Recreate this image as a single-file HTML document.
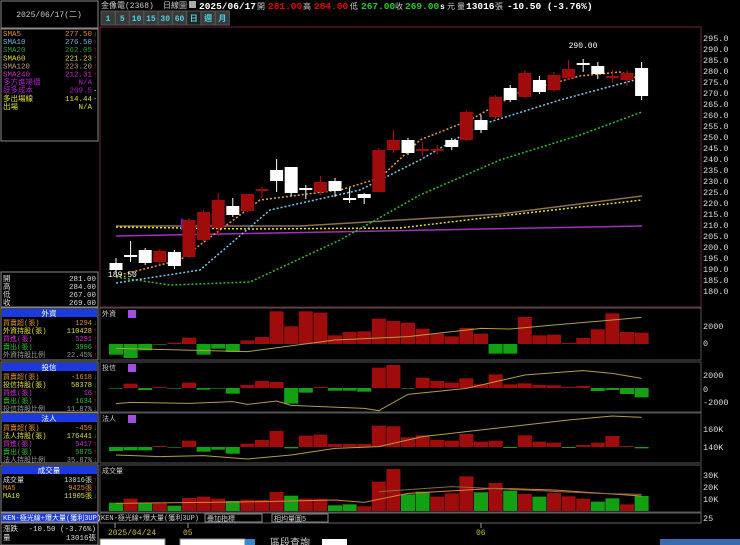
<!DOCTYPE html><html><head><meta charset="utf-8"><style>
body{margin:0;background:#000;width:740px;height:545px;overflow:hidden;font-family:"Liberation Sans","Noto Sans CJK TC",sans-serif;}
svg{position:absolute;left:0;top:0}
text{font-family:"Liberation Mono","Noto Sans CJK TC",monospace;}
</style></head><body>
<svg id="s" width="740" height="545" xmlns="http://www.w3.org/2000/svg"></svg>
<script>
var S='';
function R(x,y,w,h,f,st){S+='<rect x="'+x+'" y="'+y+'" width="'+w+'" height="'+h+'" fill="'+f+'"'+(st?' stroke="'+st+'"':'')+'/>';}
function T(x,y,t,c,sz,a,b){S+='<text x="'+x+'" y="'+y+'" fill="'+c+'" font-size="'+(sz||9)+'"'+(a?' text-anchor="'+a+'"':'')+(b?' font-weight="bold" font-family="Liberation Sans"':'')+'>'+t+'</text>';}
function L(x1,y1,x2,y2,c,w){S+='<line x1="'+x1+'" y1="'+y1+'" x2="'+x2+'" y2="'+y2+'" stroke="'+c+'" stroke-width="'+(w||1)+'"/>';}
function P(pts,c,dash,w){S+='<polyline fill="none" points="'+pts+'" stroke="'+c+'" stroke-width="'+(w||1)+'"'+(dash?' stroke-dasharray="'+dash+'"':'')+'/>';}
var RED='#a00c0c',GRN='#13a013';
R(1,1,97,27,'#000','#888');T(49,17,'2025/06/17(二)','#ccc',8,'middle');
var ma=[['SMA5','277.50','#e0902a','↓',GRN],['SMA10','276.50','#6cb6e0','↑','#e00'],['SMA20','262.05','#2aa02a','↑','#e00'],['SMA60','221.23','#e0e020','↑','#e00'],['SMA120','223.20','#c0a070','↑','#e00'],['SMA240','212.31','#d030d0','↑','#e00'],['多方進場價','N/A','#b020d0','',''],['既多成本','209.5','#b020d0','-','#ccc'],['多出場線','114.44','#e0e020','-','#ccc'],['出場','N/A','#e0e020','','']];
R(1,29,97,112,'#000','#888');
ma.forEach(function(m,i){var y=36+i*8.1;T(3,y,m[0],m[2],7.5);T(92,y,m[1],m[2],7.5,'end');if(m[3])T(93,y,m[3],m[4],7);});
R(1,272,97,35,'#000','#888');
[['開','281.00'],['高','284.00'],['低','267.00'],['收','269.00']].forEach(function(m,i){T(3,281+i*8,m[0],'#ddd',7.5);T(96,281+i*8,m[1],'#ddd',7.5,'end');});
function block(y,h,title,rows){R(1,y,97,h,'#000','#888');R(2,y+1,95,8,'#1a3adf');T(49,y+8,title,'#fff',7.5,'middle');
rows.forEach(function(r,i){var yy=y+17+i*8;T(3,yy,r[0],r[1],7);T(92,yy,r[2],r[1],7,'end');if(r[3])T(93,yy,r[3],r[3]=='↓'?GRN:'#e00',7);});}
block(308,52,'外資',[['買賣超(張)','#e0902a','1294','↓'],['外資持股(張)','#e0e020','110428','↑'],['買進(張)','#d030d0','5291','↑'],['賣出(張)','#2ac02a','3996','↑'],['外資持股比例','#999','22.45%','↑']]);
block(362,50,'投信',[['買賣超(張)','#e0902a','-1618','↓'],['投信持股(張)','#e0e020','58378','↓'],['買進(張)','#d030d0','16','↑'],['賣出(張)','#2ac02a','1634','↑'],['投信持股比例','#999','11.87%','↓']]);
block(413,50,'法人',[['買賣超(張)','#e0902a','-459','↓'],['法人持股(張)','#e0e020','176441','↓'],['買進(張)','#d030d0','5417','↑'],['賣出(張)','#2ac02a','5875','↑'],['法人持股比例','#999','35.87%','↓']]);
block(465,47,'成交量',[['成交量','#ddd','13016張','↑'],['MA5','#e0902a','9425張','↑'],['MA10','#e0e020','11905張','↓']]);
R(1,513,97,9,'#1a3adf','#888');T(3,520,'KEN-極光線+爆大量(獲利3UP)','#fff',7);
R(1,523,97,22,'#000','#888');T(3,531,'漲跌','#ddd',7.5);T(96,531,'-10.50 (-3.76%)','#ddd',7.5,'end');T(3,540,'量','#ddd',7.5);T(96,540,'13016張','#ddd',7.5,'end');
// header
T(101,8,'金像電(2368)','#ccc',8);T(163,8,'日線圖','#ccc',8);R(189,1,7,7,'#aaa');
T(199,9,'2025/06/17','#fff',9.5,null,1);T(257,9,'開','#ccc',8);T(268,9,'281.00','#e00',9.5,null,1);T(303,9,'高','#ccc',8);T(314,9,'284.00','#e00',9.5,null,1);
T(350,9,'低','#ccc',8);T(361,9,'267.00','#2c2',9.5,null,1);T(395,9,'收','#ccc',8);T(405,9,'269.00','#2c2',9.5,null,1);T(440,9,'s','#fff',8,null,1);T(447,9,'元','#ccc',8);T(457,9,'量','#ccc',8);T(466,9,'13016','#fff',9.5,null,1);T(495,9,'張','#ccc',8);T(507,9,'-10.50 (-3.76%)','#fff',9.5,null,1);
var bl=['1','5','10','15','30','60','日','週','月'];bl.forEach(function(b,i){var x=101+i*14.3;R(x,11,14,14,i==6?'#222':'#3a3a3a','#555');T(x+7,21,b,'#4cd0e0',8,'middle',1);});
R(100,27,601,280,'#000','#6a2a3a');
function yp(p){return 38+(295-p)*2.2;}
for(var p=180;p<=295;p+=5){T(703,yp(p)+3,p.toFixed(1),'#ddd',8.5);}
function cx(i){return 116+14.6*i;}
function line(arr,c,d){var s='';arr.forEach(function(a){s+=a[0]+','+a[1]+' ';});P(s,c,d,1.5);}
line([[116,226],[300,226],[500,214],[642,196]],'#8a7050');
line([[116,236],[642,226]],'#a030c0');
line([[116,227],[250,229],[400,228],[500,216],[642,200]],'#e8e020','2,2');
line([[116,277],[170,285],[250,282],[340,240],[420,195],[500,160],[580,135],[642,112]],'#30c030','2,2');
line([[116,283],[200,270],[270,210],[360,190],[420,160],[480,125],[560,100],[642,78]],'#7cc8e8','2,2');
line([[116,276],[180,260],[260,200],[340,190],[380,178],[420,140],[470,120],[520,92],[580,76],[620,72],[642,80]],'#e8a030','2,2');
S+='<polygon points="181,218 196,228 181,230" fill="#6a20c0"/>';
// [top, bottom, wickTop, wickBottom, red]
var C=[[263,270,258,273,0],[255,257,241,262,0],[250,263,248,265,0],[251,262,249,264,1],[252,266,250,269,0],[220,257,218,258,1],[212,240,210,242,1],[200,228,193,236,1],[206,215,198,217,0],[194,211,194,212,1],[189,191,187,198,1],[170,181,159,192,0],[167,193,167,196,0],[188,190,185,199,0],[182,192,176,195,1],[181,191,178,197,0],[198,200,188,203,0],[194,198,193,204,0],[150,192,148,192,1],[140,150,130,153,1],[140,153,138,155,0],[149,151,142,156,1],[149,151,145,154,1],[140,147,138,150,0],[112,140,110,141,1],[120,130,115,133,0],[97,117,95,119,1],[88,100,85,102,0],[73,97,70,98,1],[80,92,76,94,0],[75,90,72,92,1],[69,78,60,80,1],[63,65,59,72,0],[66,74,62,79,0],[76,78,70,83,1],[73,80,70,86,1],[68,96,62,100,0]];
C.forEach(function(c,i){var x=cx(i),col=c[4]?'#a00c0c':'#fff';
L(x,c[2],x,c[3],c[4]?'#c01010':'#fff');R(x-6.5,c[0],13,Math.max(c[1]-c[0],1.5),col);});
T(583,48,'290.00','#fff',8,'middle');T(108,277,'189.50','#fff',8);
function panel(y,h,lab){R(100,y,601,h,'#000','#555');T(102,y+8,lab,'#ccc',7);if(lab!='成交量'){R(128,y+2,8,8,'#a050e0');}}
panel(308,52,'外資');panel(362,50,'投信');panel(413,50,'法人');panel(465,47,'成交量');
function bars(base,arr,sc){arr.forEach(function(v,i){var x=cx(i)-7;if(v>0)R(x,base-v/sc,14,v/sc,RED);else if(v<0)R(x,base,14,-v/sc,GRN);else R(x,base,14,1,'#1a5a1a');});}
bars(344,[-32,-42,-19,0,4,19,-32,-14,-24,11,21,98,53,98,94,26,36,38,76,69,64,46,31,23,48,31,-29,-29,81,26,28,3,18,44,92,36,34],3);
bars(388,[0,13,-6,3,0,16,-5,0,-17,9,21,18,-47,-14,3,-8,-8,-11,61,69,0,31,21,16,29,11,41,11,14,9,8,3,6,-9,-6,-18,-28],3);
bars(447,[-12,-10,-10,3,0,19,-14,-8,-20,10,21,48,-4,34,37,9,9,9,64,62,29,35,21,19,39,16,19,-3,35,16,13,-3,6,13,33,3,-4],3);
var vh=[25,37,25,23,16,39,43,37,30,34,33,57,46,37,37,17,20,14,88,126,50,58,43,53,104,56,84,61,51,43,54,44,37,28,38,20,45];
var vg=[0,2,4,8,12,15,16,20,21,25,27,29,33,34,36];
vh.forEach(function(h,i){R(cx(i)-7,511-h/3,14,h/3,vg.indexOf(i)>=0?GRN:RED);});
function pl(base,arr,c){var s='';arr.forEach(function(a){s+=cx(a[0])+','+(base+a[1]/3)+' ';});P(s,c,null,1);}
pl(305,[[0,130],[9,140],[15,105],[20,95],[25,70],[27,72],[30,60],[34,45],[36,37]],'#b0a040');
pl(305,[[0,296],[1,292],[5,295],[8,290],[9,298],[11,288],[12,301],[17,310],[18,317],[20,268],[24,250],[26,230],[28,210],[31,200],[32,197],[34,205],[36,220]],'#b0a040');
pl(305,[[0,450],[3,455],[6,452],[9,462],[12,450],[15,430],[18,425],[21,395],[24,380],[28,360],[31,345],[34,333],[36,337]],'#b0a040');
pl(440,[[0,190],[10,185],[15,180],[17,187],[20,160],[26,145],[30,150],[36,168]],'#e08030');
pl(440,[[18,155],[23,140],[27,148],[33,160],[36,163]],'#8a6a40');
T(703,329,'2000','#ddd',8.5);T(703,346,'0','#ddd',8.5);T(703,378,'2000','#ddd',8.5);T(703,392,'0','#ddd',8.5);T(703,405,'-2000','#ddd',8.5);
T(703,432,'160K','#ddd',8.5);T(703,450,'140K','#ddd',8.5);T(703,478,'30K','#ddd',8.5);T(703,490,'20K','#ddd',8.5);T(703,502,'10K','#ddd',8.5);T(703,521,'25','#ddd',8.5);
R(100,513,601,10,'#000','#666');T(101,520,'KEN-極光線+爆大量(獲利3UP)','#ccc',7);R(205,514,57,8,'#000','#888');T(207,521,'疊加指標','#ccc',7);R(272,514,56,8,'#000','#888');T(274,521,'相均量圖5','#ccc',7);
L(115,523,115,528,'#999');L(188,523,188,528,'#999');L(481,523,481,528,'#999');
T(108,535,'2025/04/24','#d0c020',8);T(183,535,'05','#d0c020',8);T(476,535,'06','#d0c020',8);
R(100,539,65,7,'#fff','#888');R(180,539,65,7,'#fff','#888');R(245,539,10,7,'#3a8ad0');T(270,546,'區段查詢','#ccc',10);R(322,539,25,7,'#fff');R(660,539,80,7,'#3a6ab0');
document.getElementById('s').innerHTML=S;
</script></body></html>
